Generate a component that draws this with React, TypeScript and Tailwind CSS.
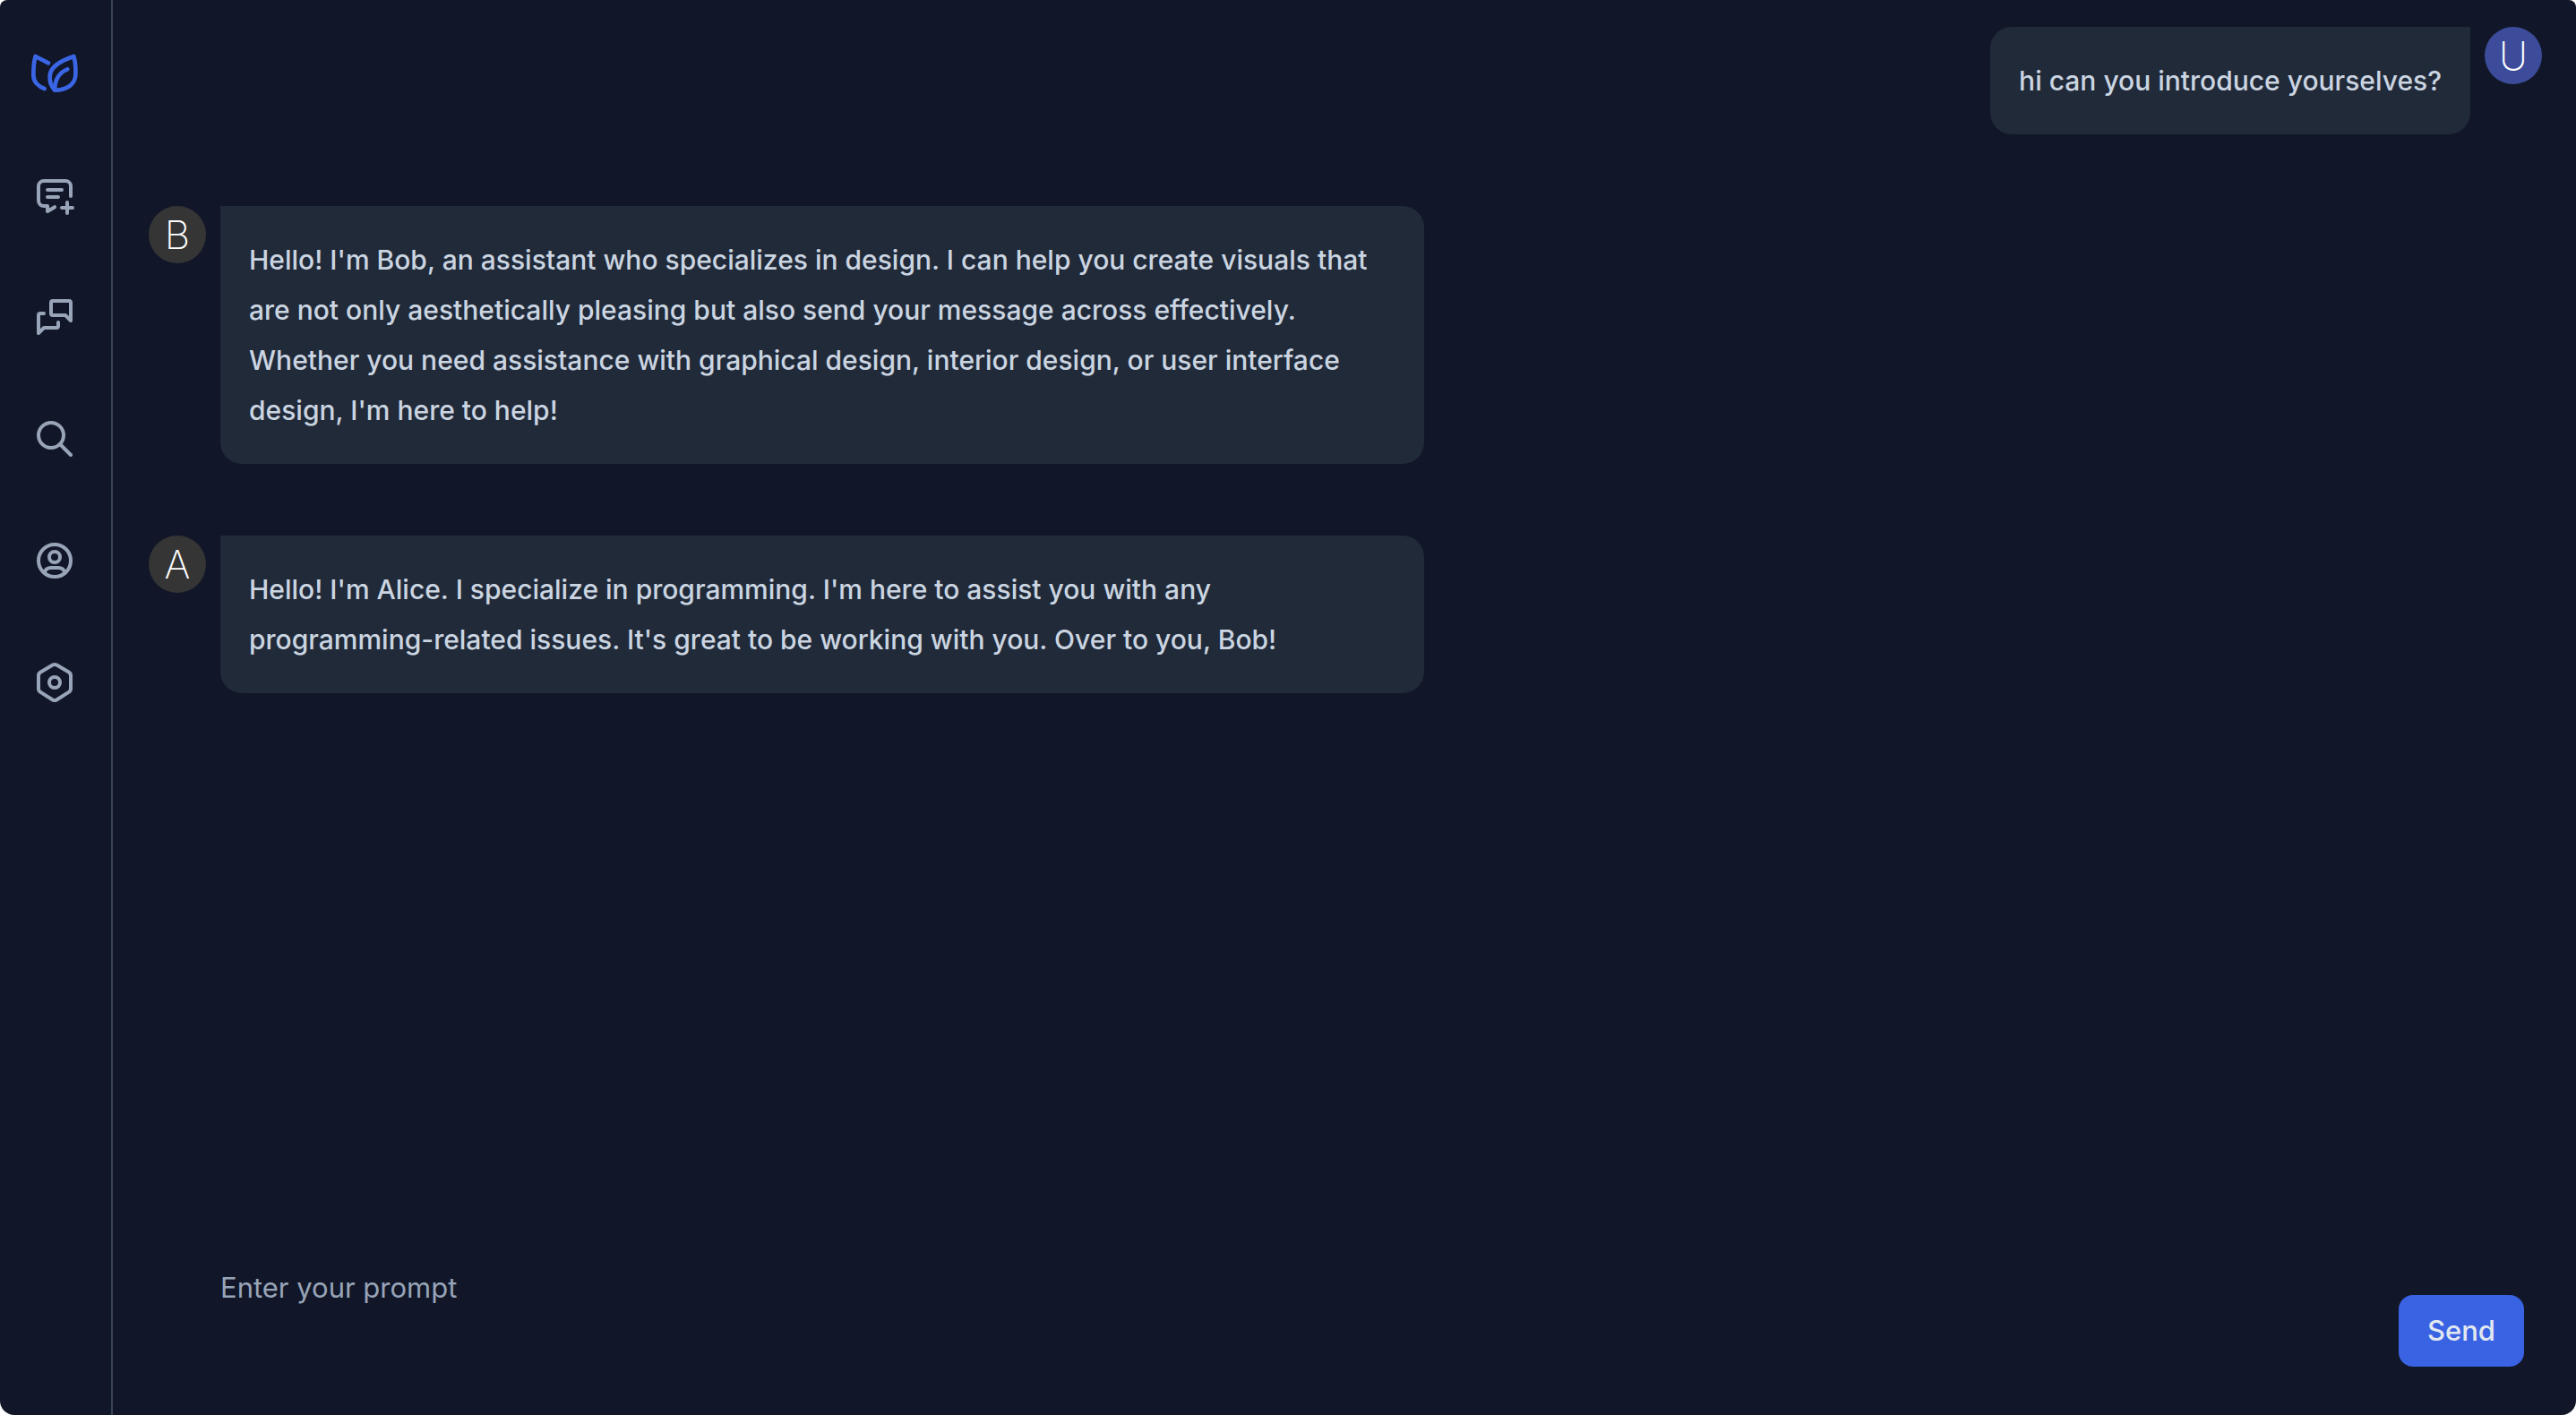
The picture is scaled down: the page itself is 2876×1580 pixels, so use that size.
import { type ReactNode } from "react";

function Icon({ children }: { children: ReactNode }) {
  return (
    <svg
      viewBox="0 0 24 24"
      className="size-12"
      fill="none"
      stroke="currentColor"
      strokeWidth={2}
      strokeLinecap="round"
      strokeLinejoin="round"
      aria-hidden="true"
    >
      {children}
    </svg>
  );
}

function Logo() {
  return (
    <svg
      viewBox="99 162 168 168"
      className="size-14"
      fill="none"
      stroke="currentColor"
      strokeWidth={14}
      strokeLinecap="round"
      strokeLinejoin="round"
      aria-hidden="true"
    >
      <path d="M162 211L119 189C113 205 112 225 112 252C112 275 130 290 149 297" />
      <path d="M247 189C253 208 254 230 253 252C251 282 225 302 183 302C170 288 166 270 167 255C168 230 190 214 212 203C225 197 238 192 247 189Z" />
      <path d="M183 300C184 270 195 244 226 232" />
    </svg>
  );
}

const navItems: { label: string; icon: ReactNode }[] = [
  {
    label: "New chat",
    icon: (
      <Icon>
        <path d="M8 9h8M8 13h6M12.01 18.594L8 21v-3H6a3 3 0 0 1-3-3V7a3 3 0 0 1 3-3h12a3 3 0 0 1 3 3v5.5M16 19h6M19 16v6" />
      </Icon>
    ),
  },
  {
    label: "Chats",
    icon: (
      <Icon>
        <path d="M21 14l-3-3h-7a1 1 0 0 1-1-1V4a1 1 0 0 1 1-1h9a1 1 0 0 1 1 1v10" />
        <path d="M14 15v2a1 1 0 0 1-1 1H6l-3 3V11a1 1 0 0 1 1-1h2" />
      </Icon>
    ),
  },
  {
    label: "Search",
    icon: (
      <Icon>
        <circle cx="10" cy="10" r="7" />
        <path d="M21 21l-6-6" />
      </Icon>
    ),
  },
  {
    label: "Profile",
    icon: (
      <Icon>
        <circle cx="12" cy="12" r="9" />
        <circle cx="12" cy="10" r="3" />
        <path d="M6.168 18.849A4 4 0 0 1 10 16h4a4 4 0 0 1 3.834 2.855" />
      </Icon>
    ),
  },
  {
    label: "Settings",
    icon: (
      <Icon>
        <path d="M19.875 6.27A2.225 2.225 0 0 1 21 8.218v7.284c0 .809-.443 1.555-1.158 1.948l-6.75 4.27a2.269 2.269 0 0 1-2.184 0l-6.75-4.27A2.225 2.225 0 0 1 3 15.502V8.217c0-.809.443-1.554 1.158-1.947l6.75-3.98a2.33 2.33 0 0 1 2.25 0l6.75 3.98z" />
        <circle cx="12" cy="12" r="3" />
      </Icon>
    ),
  },
];

function Avatar({ letter, user = false }: { letter: string; user?: boolean }) {
  return (
    <div
      className={`flex size-16 shrink-0 items-center justify-center rounded-full text-[44px] leading-none font-extralight text-white ${
        user ? "bg-[#3c4c9b]" : "bg-[#353535]"
      }`}
    >
      {letter}
    </div>
  );
}

function AssistantMessage({ letter, text }: { letter: string; text: string }) {
  return (
    <article className="flex items-start gap-4">
      <Avatar letter={letter} />
      <p className="w-full max-w-[1344px] rounded-3xl rounded-tl-none bg-[#202a39] p-8">{text}</p>
    </article>
  );
}

export default function App() {
  return (
    <div className="min-h-screen bg-white font-['Inter',sans-serif]">
      <div className="flex min-h-screen overflow-hidden rounded-t-lg rounded-b-2xl bg-[#111728] text-[31px] leading-[56px] text-[#cbd5e1]">
        <aside className="flex w-[126px] shrink-0 flex-col items-center gap-12 border-r-2 border-[#374452] pt-[38px] pr-0.5">
          <a href="#home" aria-label="Home" className="flex size-[88px] items-center justify-center text-[#3a66e6]">
            <Logo />
          </a>
          <nav className="flex flex-col gap-12 text-[#98a4b8]">
            {navItems.map((item) => (
              <button key={item.label} type="button" aria-label={item.label} className="flex size-[88px] items-center justify-center">
                {item.icon}
              </button>
            ))}
          </nav>
        </aside>

        <main className="flex flex-1 flex-col">
          <section className="flex flex-1 flex-col gap-20 pt-[30px] pr-[38px] pl-10 text-[30px] leading-[56px] font-medium">
            <article className="flex items-start justify-end gap-4">
              <p className="rounded-3xl rounded-tr-none bg-[#202a39] p-8">hi can you introduce yourselves?</p>
              <Avatar letter="U" user />
            </article>
            <AssistantMessage
              letter="B"
              text="Hello! I'm Bob, an assistant who specializes in design. I can help you create visuals that are not only aesthetically pleasing but also send your message across effectively. Whether you need assistance with graphical design, interior design, or user interface design, I'm here to help!"
            />
            <AssistantMessage
              letter="A"
              text="Hello! I'm Alice. I specialize in programming. I'm here to assist you with any programming-related issues. It's great to be working with you. Over to you, Bob!"
            />
          </section>

          <form className="flex items-end pr-[58px] pb-[54px] pl-[120px]" onSubmit={(e) => e.preventDefault()}>
            <textarea
              aria-label="Prompt"
              rows={2}
              placeholder="Enter your prompt"
              className="block flex-1 resize-none bg-transparent pb-1 leading-[56px] outline-none placeholder:text-[#98a4b8]"
            />
            <button type="submit" className="h-20 rounded-2xl bg-[#3a63e4] px-8 font-medium text-[#e2e8f0]">
              Send
            </button>
          </form>
        </main>
      </div>
    </div>
  );
}
